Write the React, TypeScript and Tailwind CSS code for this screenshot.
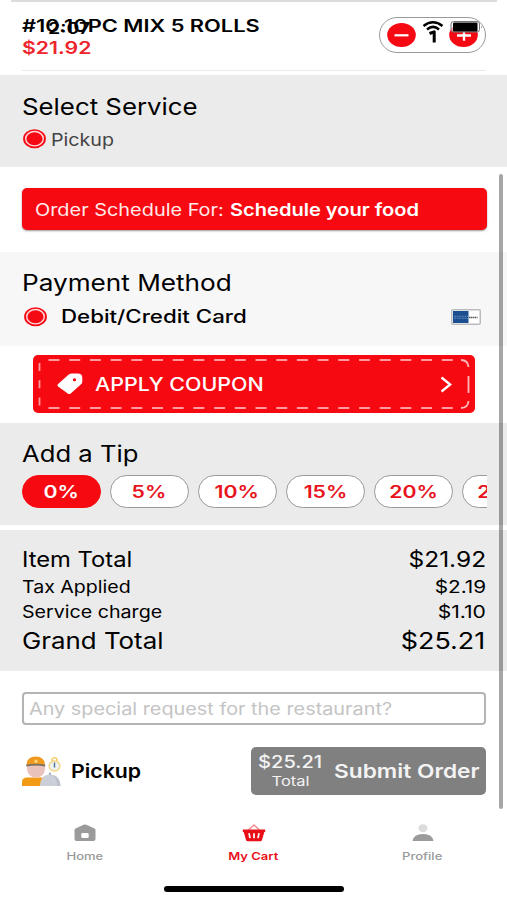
import type { ReactNode } from 'react';
import clsx from 'clsx';

type TextProps = {
  children: ReactNode;
  className?: string;
};

function Text({ children, className }: TextProps) {
  return <span className={clsx('block w-max whitespace-pre', className)}>{children}</span>;
}

function Radio() {
  return (
    <svg viewBox="0 0 24 20" className="h-5 w-6 shrink-0">
      <ellipse cx="12.5" cy="9.7" rx="11.4" ry="9.5" fill="#f50a14" />
      <ellipse cx="12.5" cy="9.7" rx="8.8" ry="7.2" fill="none" stroke="#ffd9da" strokeWidth="1.4" />
    </svg>
  );
}

function QuantityStepper() {
  return (
    <div className="relative flex h-9 w-[107px] items-center justify-between rounded-full border border-[#999] bg-white px-[7px]">
      <svg viewBox="0 0 29 24" className="h-6 w-[29px]">
        <ellipse cx="14.5" cy="12" rx="14.3" ry="12" fill="#f50a14" />
        <path d="M7.5 12.3h14" stroke="#fff" strokeWidth="2.2" />
      </svg>
      <svg viewBox="0 0 29 24" className="h-6 w-[29px]">
        <ellipse cx="14.5" cy="12" rx="14.3" ry="12" fill="#f50a14" />
        <path d="M8 12.5h14M15 6.8v11" stroke="#fff" strokeWidth="2.3" />
      </svg>
      {/* status bar wifi, sits over the stepper */}
      <svg viewBox="0 0 22 24" className="absolute top-[2px] left-[42px] h-6 w-[22px]" fill="none" stroke="#000">
        <path d="M1.5 6Q11 -1.5 20.5 6" strokeWidth="2.5" />
        <path d="M5 9.5Q11 4.3 17 9.5" strokeWidth="2.5" />
        <path d="M7.5 13.5L12.2 11.8V22.5" strokeWidth="3" strokeLinejoin="round" />
      </svg>
      {/* battery */}
      <svg viewBox="0 0 34 12" className="absolute top-[3px] left-[70px] h-3 w-[34px]">
        <rect x="1" y=".5" width="28.5" height="10.5" rx="2.5" fill="#fff" fillOpacity=".6" stroke="#777" />
        <rect x="3" y="1.5" width="24.5" height="9" rx="1" fill="#000" />
        <path d="M31 4.5q1.6 1.5 0 3z" fill="#777" />
      </svg>
    </div>
  );
}

function CardLogo() {
  return (
    <svg viewBox="0 0 30 16" className="h-4 w-[30px]">
      <rect x=".75" y=".75" width="28.5" height="14.5" rx="1" fill="#fff" stroke="#b8bcc0" strokeWidth="1.5" />
      <rect x="2" y="2" width="15.5" height="12" fill="#1c4f91" />
      <path d="M3 7.3h14M3 9.3h14" stroke="#5f83b3" strokeWidth="1" strokeDasharray="2 .6" />
      <path d="M18 8.5h8.5" stroke="#555" strokeWidth="1.4" strokeDasharray="1.5 .5" />
    </svg>
  );
}

function ApplyCoupon() {
  return (
    <button className="relative mt-[9px] ml-[33px] flex h-[58px] w-[442px] items-center rounded-[5px] bg-[#f70912] pl-6 text-white">
      <svg viewBox="0 0 442 58" className="absolute inset-0 h-full w-full" fill="none" stroke="#ff9a9e" strokeWidth="1.8">
        <path d="M15.5 5H425M15.5 53H425" strokeDasharray="11 9.7" />
        <path d="M6.5 8v43" strokeDasharray="8 9.2" />
        <path d="M428 5q7 0 7.5 7M435.5 21v17M435.5 46q-.5 7-7.5 7" stroke="#ffb9bb" />
      </svg>
      <svg viewBox="0 0 26 22" className="h-[22px] w-[26px]">
        <path
          fillRule="evenodd"
          d="M1.1 11L11.2 2Q13 .6 15 .6H20.5Q25.3.6 25.3 4.8V8.5Q25.3 10.3 23.8 11.6L13.7 20.4Q12.3 21.5 10.8 20.4L1.1 13.4Q-.2 12.2 1.1 11ZM17.5 5.2A1.7 1.5 0 1 0 17.5 8.2A1.7 1.5 0 1 0 17.5 5.2Z"
          fill="#fff"
        />
      </svg>
      <Text className="ml-3 origin-left scale-x-[1.19] text-[18px] font-medium">APPLY COUPON</Text>
      <svg viewBox="0 0 12 17" className="absolute top-[21px] left-[407px] h-[17px] w-3">
        <path d="M1.5 1.5L10.2 8.5L1.5 15.5" fill="none" stroke="#fff" strokeWidth="2.3" />
      </svg>
    </button>
  );
}

const tips = ['0%', '5%', '10%', '15%', '20%', '25%'];

function TipPicker() {
  return (
    <div className="-ml-[0.5px] mt-[6px] flex w-[465px] gap-[9px] overflow-hidden">
      {tips.map((tip, i) => (
        <button
          key={tip}
          className={clsx(
            'flex h-[33px] w-[79px] shrink-0 items-center justify-center rounded-full border pt-[2px] text-[17px] font-semibold',
            i === 0 ? 'border-[#f70912] bg-[#f70912] text-white' : 'border-[#999] bg-white text-[#e8131d]'
          )}
        >
          <Text className="scale-x-[1.25]">{tip}</Text>
        </button>
      ))}
    </div>
  );
}

type TotalRowProps = {
  label: string;
  amount: string;
  className: string;
  labelClass: string;
  amountClass: string;
};

function TotalRow({ label, amount, className, labelClass, amountClass }: TotalRowProps) {
  return (
    <div className={clsx('flex items-center justify-between', className)}>
      <Text className={clsx('origin-left', labelClass)}>{label}</Text>
      <Text className={clsx('origin-right', amountClass)}>{amount}</Text>
    </div>
  );
}

function PickupIcon() {
  return (
    <svg viewBox="0 0 39 31" className="h-[31px] w-[39px]">
      <path d="M0 30V26Q0 21.5 5 21.5H22V30Z" fill="#f39a17" />
      <path d="M5 9.5V13Q6 21.5 14 21.5T23 13V9.5Z" fill="#e9c3bb" />
      <path d="M4.5 9.5Q4.5 .5 13.7 .5T23 9.5Z" fill="#f0991f" />
      <path d="M4.3 9.6Q13.5 7.6 23.2 9.6" stroke="#77706a" strokeWidth="1.8" fill="none" />
      <path d="M14 3.2l.7 1.3 1.5.2-1.1 1 .3 1.4-1.4-.7-1.4.7.3-1.4-1.1-1 1.5-.2z" fill="#ffe08b" />
      <path d="M18 30Q18.5 18.5 28 18.5T38.5 30Z" fill="#cbd0d8" />
      <path d="M31 19.2Q38 21 38.5 30H35Q35.500 24 31 19.2Z" fill="#bcc2cc" />
      <circle cx="28" cy="17.800" r="1.2" fill="#a8aeb8" />
      <ellipse cx="32.5" cy="3.7" rx="2.5" ry="2" fill="none" stroke="#f5cf6a" strokeWidth="1.5" />
      <ellipse cx="32.5" cy="10" rx="5.4" ry="5" fill="#edf2f3" stroke="#f3d584" strokeWidth="1.4" />
      <path d="M32.5 6.5V11.5" stroke="#54748a" strokeWidth="1.4" />
    </svg>
  );
}

function HomeIcon() {
  return (
    <svg viewBox="0 0 22 18" className="h-[18px] w-[22px]">
      <path
        fillRule="evenodd"
        d="M.5 6Q.5 5 1.5 4.5L9.5.8Q11 .2 12.5.8L20.5 4.5Q21.5 5 21.5 6V15Q21.5 17 19.5 17H2.5Q.5 17 .5 15ZM8.5 9Q7.3 9 7.3 10V13Q7.3 14 8.5 14H13.5Q14.7 14 14.7 13V10Q14.7 9 13.5 9Z"
        fill="#9b9b9b"
      />
    </svg>
  );
}

function BasketIcon() {
  return (
    <svg viewBox="0 0 24 18" className="h-[18px] w-6">
      <path d="M6 6.5L12 1L18 6.5" fill="none" stroke="#f58a8f" strokeWidth="1.3" />
      <path d="M.8 5.5H23.2V8H22.3L20 16Q19.7 17.3 18 17.3H6Q4.3 17.3 4 16L1.7 8H.8Z" fill="#e90f19" />
      <path d="M7 9.2l1 5M12 9.2v5M17 9.2l-1 5" stroke="#fff" strokeWidth="1.7" />
    </svg>
  );
}

function ProfileIcon() {
  return (
    <svg viewBox="0 0 22 18" className="h-[18px] w-[22px]">
      <ellipse cx="11" cy="4.2" rx="4.5" ry="4" fill="#dcdcdc" />
      <path d="M.5 17Q1.5 10 11 10T21.5 17Z" fill="#9b9b9b" />
    </svg>
  );
}

type TabProps = {
  icon: ReactNode;
  label: string;
  className: string;
};

function Tab({ icon, label, className }: TabProps) {
  return (
    <div className={clsx('flex flex-1 flex-col items-center text-[10.5px] leading-4 font-medium', className)}>
      {icon}
      <Text className="mt-[7px] scale-x-[1.24]">{label}</Text>
    </div>
  );
}

export default function App() {
  return (
    <div className="relative flex h-[900px] w-[507px] flex-col overflow-hidden bg-white font-['Inter',sans-serif] text-black">
      <header className="relative flex h-[75px] shrink-0 justify-between pt-[15px] pr-[21px] pl-[22px]">
        <div className="absolute top-0 right-[10px] left-[11px] h-[2px] bg-[#dcdcdc]" />
        <div className="text-[17px] leading-[22px] font-semibold">
          <Text className="origin-left scale-x-[1.283]">#10.10PC MIX 5 ROLLS</Text>
          <Text className="origin-left scale-x-[1.25] text-[#ee252d]">$21.92</Text>
        </div>
        {/* status bar clock */}
        <Text className="absolute top-[17px] left-[48px] origin-left scale-x-[1.22] text-[16px] leading-[22px] font-semibold">2:07</Text>
        <div className="mt-[2px]">
          <QuantityStepper />
        </div>
        <div className="absolute right-[21px] bottom-1 left-[22px] h-px bg-[#eaeaea]" />
      </header>

      <section className="h-[92px] shrink-0 bg-[#ebebeb] px-[22px] pt-[17px]">
        <Text className="origin-left scale-x-[1.122] text-[23px] leading-[30px]">Select Service</Text>
        <div className="mt-[7px] flex h-5 items-center">
          <Radio />
          <Text className="mt-px ml-[5px] origin-left scale-x-[1.155] text-[17px] leading-5 text-[#444]">Pickup</Text>
        </div>
      </section>

      <section className="h-[85px] shrink-0 pt-[21px] pl-[22px]">
        <button className="flex h-[42px] w-[465px] items-center rounded-[5px] bg-[#f70912] pt-[3px] pl-[13px] text-[17px] text-white shadow-[0_1px_2px_rgba(0,0,0,0.4)]">
          <Text className="w-[195px]! origin-left scale-x-[1.17] text-left text-[#ffe9e9]">Order Schedule For:</Text>
          <Text className="origin-left scale-x-[1.18] font-semibold">Schedule your food</Text>
        </button>
      </section>

      <section className="h-[94px] shrink-0 bg-[#f7f7f7] px-[22px] pt-[16px]">
        <Text className="origin-left scale-x-[1.162] text-[22.5px] leading-[30px]">Payment Method</Text>
        <div className="mt-[9px] flex h-5 items-center pr-[4px] pl-[1px]">
          <Radio />
          <Text className="ml-[14px] origin-left scale-x-[1.237] text-[18px] leading-5 font-medium">Debit/Credit Card</Text>
          <div className="ml-auto">
            <CardLogo />
          </div>
        </div>
      </section>

      <section className="h-[77px] shrink-0">
        <ApplyCoupon />
      </section>

      <section className="h-[102px] shrink-0 bg-[#ebebeb] pt-4 pl-[22px]">
        <Text className="origin-left scale-x-[1.14] text-[22.5px] leading-[30px]">Add a Tip</Text>
        <TipPicker />
      </section>

      <section className="mt-[5px] h-[141px] shrink-0 bg-[#ebebeb] pt-[14px] pr-[21px] pl-[22px]">
        <TotalRow
          label="Item Total"
          amount="$21.92"
          className="h-[30px] text-[21.5px]"
          labelClass="scale-x-[1.105]"
          amountClass="scale-x-[1.14]"
        />
        <TotalRow
          label="Tax Applied"
          amount="$2.19"
          className="h-[25px] pt-[2px] text-[17px]"
          labelClass="scale-x-[1.15]"
          amountClass="scale-x-[1.22]"
        />
        <TotalRow
          label="Service charge"
          amount="$1.10"
          className="h-[25px] pt-[2px] text-[17px]"
          labelClass="scale-x-[1.155]"
          amountClass="scale-x-[1.24]"
        />
        <TotalRow
          label="Grand Total"
          amount="$25.21"
          className="h-[32px] pt-[2px] pr-px text-[23px]"
          labelClass="scale-x-[1.124]"
          amountClass="scale-x-[1.17]"
        />
      </section>

      <div className="mt-[21px] ml-[22px] flex h-[33px] w-[464px] shrink-0 items-center rounded-[4px] border-2 border-[#b4b4b4] pt-[2px] pl-[5px] text-[17px] text-[#c4c4c4]">
        <Text className="origin-left scale-x-[1.167]">Any special request for the restaurant?</Text>
      </div>

      <div className="mt-[22px] flex h-12 shrink-0 items-center pr-[21px] pl-[22px]">
        <PickupIcon />
        <Text className="mt-[2px] ml-[10px] origin-left scale-x-[1.15] text-[18.5px] font-semibold">Pickup</Text>
        <button className="relative ml-auto flex h-12 w-[235px] items-center rounded-[5px] bg-[#808080] text-[#f3f3f3]">
          <div className="flex w-[79px] flex-col items-center">
            <Text className="mt-px scale-x-[1.18] text-[17px] leading-[19px] font-medium">$25.21</Text>
            <Text className="scale-x-[1.22] text-[13.5px] leading-[18px]">Total</Text>
          </div>
          <Text className="mt-[2px] ml-1 origin-left scale-x-[1.195] text-[19px] font-semibold">Submit Order</Text>
        </button>
      </div>

      <nav className="mt-[29px] flex shrink-0">
        <Tab icon={<HomeIcon />} label="Home" className="text-[#999]" />
        <Tab icon={<BasketIcon />} label="My Cart" className="font-semibold! text-[#e90f19]" />
        <Tab icon={<ProfileIcon />} label="Profile" className="text-[#999]" />
      </nav>

      <div className="mt-[21px] ml-[164px] h-[6px] w-[180px] rounded-full bg-black" />

      {/* scroll indicator */}
      <div className="absolute top-[174px] right-[4px] h-[635px] w-[4px] rounded-full bg-black/35" />
    </div>
  );
}
